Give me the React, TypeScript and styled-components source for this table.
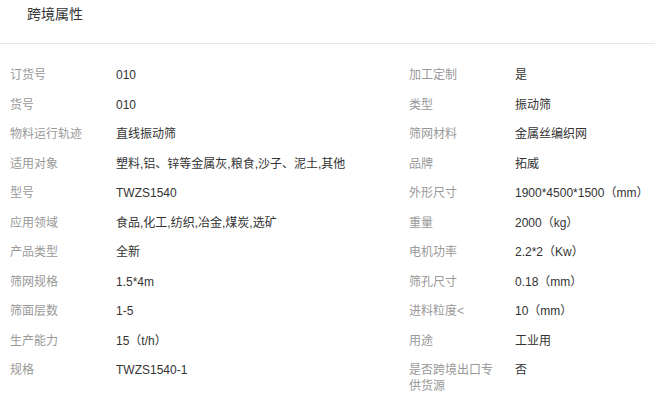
import * as React from 'react';
import styled, { createGlobalStyle } from 'styled-components';

const GlobalStyle = createGlobalStyle`
    body {
        margin: 0;
        background: #fff;
        font-family: "Liberation Sans", "Noto Sans CJK SC", sans-serif;
    }
`;

const Panel = styled.section`
    width: 655px;
    background: #fff;
`;

const Header = styled.div`
    box-sizing: border-box;
    height: 44px;
    padding: 4px 0 0 27px;
    border-bottom: 1px solid #e6e6e6;
`;

const Title = styled.h3`
    margin: 0;
    font-size: 14px;
    line-height: 20px;
    font-weight: normal;
    color: #333;
`;

const AttrGrid = styled.div`
    display: grid;
    grid-template-columns: 399px 1fr;
    row-gap: 13.5px;
    padding: 23px 0 0 10px;
`;

const Attr = styled.div`
    display: flex;
    font-size: 12px;
    line-height: 16px;
`;

const AttrLabel = styled.span`
    flex: 0 0 90px;
    margin-right: 16px;
    color: #999;
`;

const AttrValue = styled.span`
    color: #333;
`;

const attrs: [string, string][] = [
    ['订货号', '010'],
    ['加工定制', '是'],
    ['货号', '010'],
    ['类型', '振动筛'],
    ['物料运行轨迹', '直线振动筛'],
    ['筛网材料', '金属丝编织网'],
    ['适用对象', '塑料,铝、锌等金属灰,粮食,沙子、泥土,其他'],
    ['品牌', '拓威'],
    ['型号', 'TWZS1540'],
    ['外形尺寸', '1900*4500*1500（mm）'],
    ['应用领域', '食品,化工,纺织,冶金,煤炭,选矿'],
    ['重量', '2000（kg）'],
    ['产品类型', '全新'],
    ['电机功率', '2.2*2（Kw）'],
    ['筛网规格', '1.5*4m'],
    ['筛孔尺寸', '0.18（mm）'],
    ['筛面层数', '1-5'],
    ['进料粒度<', '10（mm）'],
    ['生产能力', '15（t/h）'],
    ['用途', '工业用'],
    ['规格', 'TWZS1540-1'],
    ['是否跨境出口专供货源', '否'],
];

export default function App() {
    return (
        <>
            <GlobalStyle />
            <Panel>
                <Header>
                    <Title>跨境属性</Title>
                </Header>
                <AttrGrid>
                    {attrs.map(([label, value]) => (
                        <Attr key={label}>
                            <AttrLabel>{label}</AttrLabel>
                            <AttrValue>{value}</AttrValue>
                        </Attr>
                    ))}
                </AttrGrid>
            </Panel>
        </>
    );
}
